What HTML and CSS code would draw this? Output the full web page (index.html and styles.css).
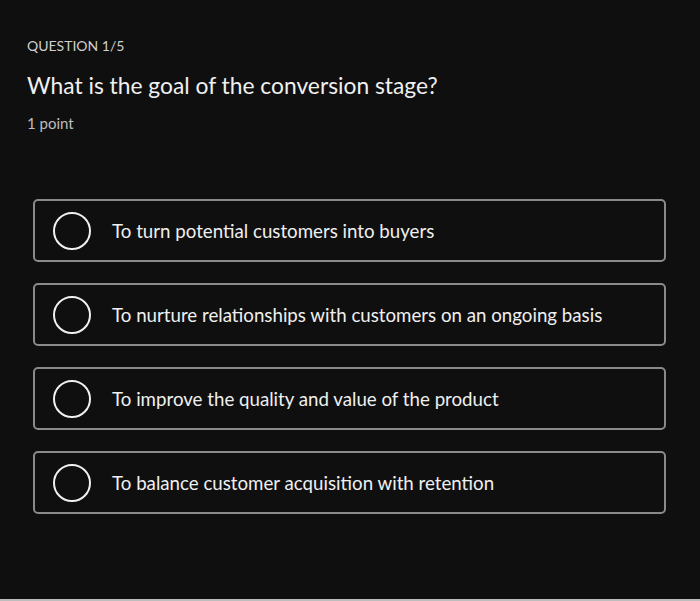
FILE: index.html
```html
<!DOCTYPE html>
<html>
<head>
<meta charset="utf-8">
<link rel="stylesheet" href="styles.css">
</head>
<body>
<div class="page">
  <div class="kicker">QUESTION 1/5</div>
  <h1 class="title">What is the goal of the conversion stage?</h1>
  <div class="points">1 point</div>
  <div class="options">
    <div class="option"><span class="radio"></span><span class="label">To turn potential customers into buyers</span></div>
    <div class="option"><span class="radio"></span><span class="label">To nurture relationships with customers on an ongoing basis</span></div>
    <div class="option"><span class="radio"></span><span class="label">To improve the quality and value of the product</span></div>
    <div class="option"><span class="radio"></span><span class="label">To balance customer acquisition with retention</span></div>
  </div>
</div>
</body>
</html>
```
FILE: styles.css
```css
html, body {
  margin: 0;
  padding: 0;
  background: #0f0f0f;
}
body {
  width: 700px;
  height: 601px;
  overflow: hidden;
  font-family: "Lato", "Liberation Sans", sans-serif;
  color: #eeeeee;
  box-shadow: inset 0 -2px 0 #bdbdbd;
}
.page {
  padding: 36px 34px 0 27px;
}
.kicker {
  font-size: 14px;
  line-height: 20px;
  color: #cfcfcf;
}
.title {
  margin: 14px 0 0 0;
  font-size: 22.8px;
  font-weight: 400;
  line-height: 30px;
  color: #f0f0f0;
}
.points {
  margin-top: 13px;
  font-size: 15px;
  line-height: 20px;
  color: #bdbdbd;
}
.options {
  margin: 66px 0 0 6px;
  display: flex;
  flex-direction: column;
  gap: 21px;
}
.option {
  height: 59px;
  border: 2px solid #8a8a8a;
  border-radius: 5px;
  display: flex;
  align-items: center;
  padding-left: 18px;
}
.radio {
  width: 34px;
  height: 34px;
  border: 2px solid #f0f0f0;
  border-radius: 50%;
  flex: none;
}
.label {
  margin-left: 21px;
  font-size: 18.7px;
  color: #f0f0f0;
}
```
